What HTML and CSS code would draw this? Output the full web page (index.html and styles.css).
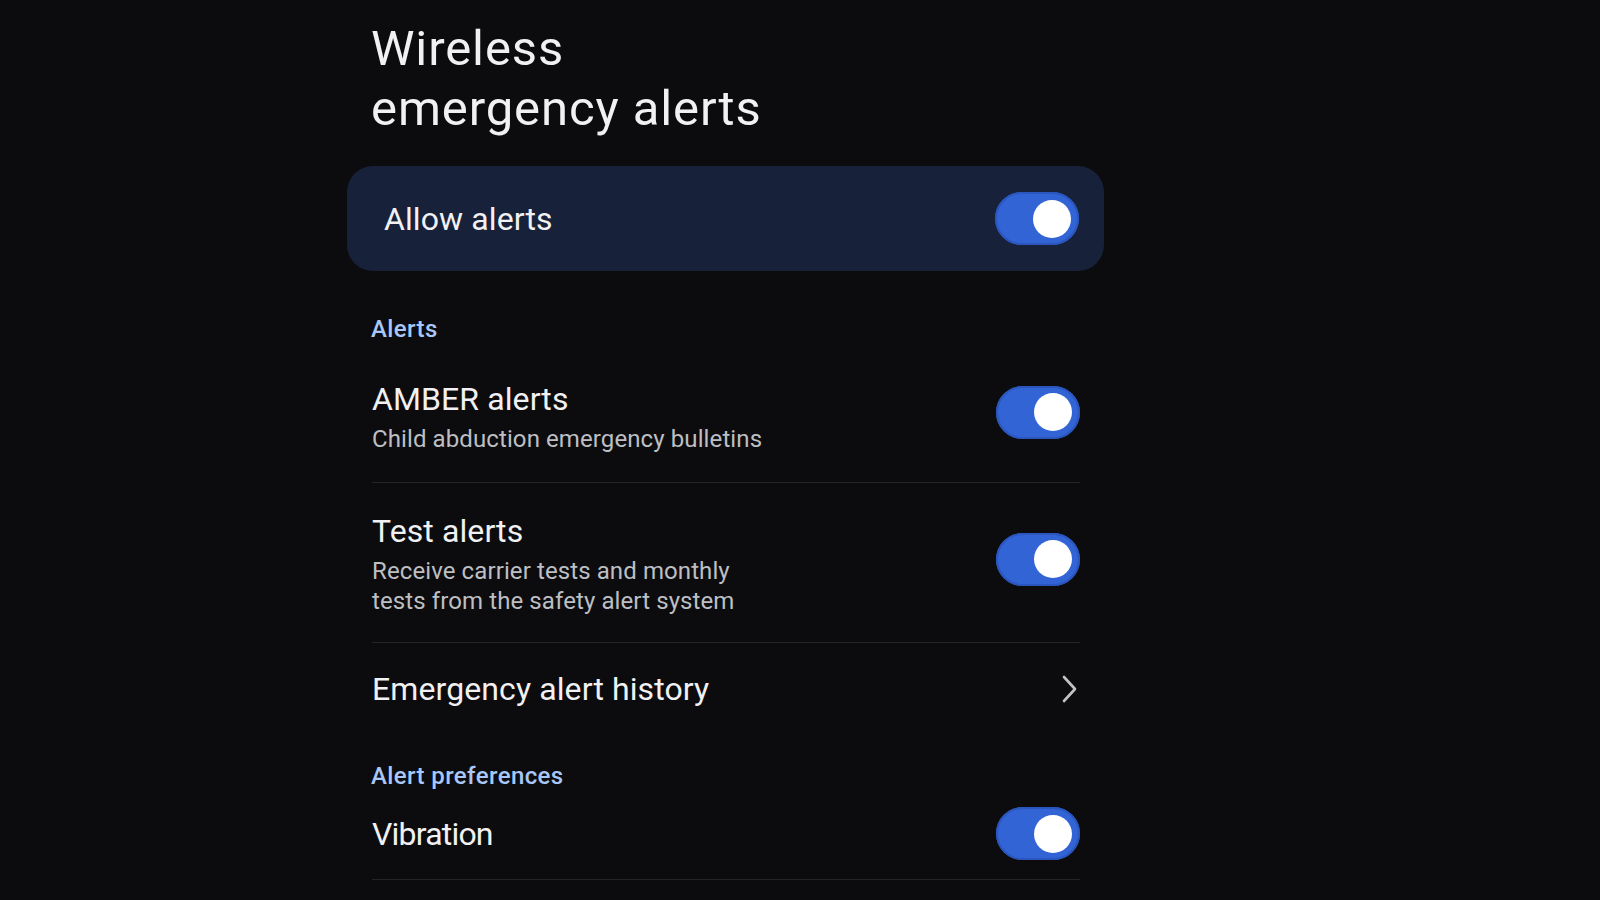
FILE: index.html
```html
<!DOCTYPE html>
<html lang="en">
<head>
    <meta charset="UTF-8">
    <meta name="viewport" content="width=device-width, initial-scale=1.0">
    <title>Wireless emergency alerts</title>
    <link rel="stylesheet" href="styles.css">
</head>
<body>
    <div class="page">
        <h1 class="title">Wireless<br>emergency alerts</h1>

        <div class="card">
            <div class="card-label">Allow alerts</div>
            <div class="toggle on"><div class="knob"></div></div>
        </div>

        <div class="section-title">Alerts</div>
        <div class="list">
            <div class="row">
                <div class="text">
                    <div class="row-title">AMBER alerts</div>
                    <div class="row-sub">Child abduction emergency bulletins</div>
                </div>
                <div class="toggle on raised"><div class="knob"></div></div>
            </div>
            <div class="row tall">
                <div class="text">
                    <div class="row-title">Test alerts</div>
                    <div class="row-sub">Receive carrier tests and monthly<br>tests from the safety alert system</div>
                </div>
                <div class="toggle on raised"><div class="knob"></div></div>
            </div>
            <div class="row link">
                <div class="row-title">Emergency alert history</div>
                <svg class="chevron" width="18" height="28" viewBox="0 0 18 28">
                    <path d="M3 2 L14 14 L3 26" fill="none" stroke="#c2c2c4" stroke-width="2.6" stroke-linecap="round" stroke-linejoin="round"/>
                </svg>
            </div>
        </div>

        <div class="section-title second">Alert preferences</div>
        <div class="list">
            <div class="row compact">
                <div class="row-title narrow">Vibration</div>
                <div class="toggle on"><div class="knob"></div></div>
            </div>
        </div>
    </div>
</body>
</html>
```

FILE: styles.css
```css
html, body {
    margin: 0;
    padding: 0;
    background-color: #0c0c0e;
    font-family: Roboto, "Noto Sans", sans-serif;
    color: #f1f1f3;
}
.page {
    width: 757px;
    margin-left: 347px;
    padding-top: 19px;
}
.title {
    margin: 0 24px;
    font-size: 49px;
    line-height: 60px;
    font-weight: 400;
    letter-spacing: 0.9px;
}
.card {
    margin-top: 27px;
    height: 105px;
    box-sizing: border-box;
    padding: 0 25px 0 37px;
    background-color: #17213a;
    border-radius: 26px;
    display: flex;
    align-items: center;
    justify-content: space-between;
}
.card-label {
    font-size: 32px;
    line-height: 40px;
    letter-spacing: 0.1px;
}
.section-title {
    margin: 42px 24px 6px;
    font-size: 24px;
    line-height: 32px;
    font-weight: 500;
    letter-spacing: 0.4px;
    color: #a8c7fa;
}
.section-title.second {
    margin-top: 25px;
    margin-bottom: 4px;
}
.list {
    margin: 0 24px 0 25px;
}
.row {
    display: flex;
    align-items: center;
    justify-content: space-between;
    padding: 28px 0;
    border-bottom: 1px solid #242427;
}
.row.tall {
    padding-bottom: 26px;
}
.row.link {
    padding: 26px 0;
    border-bottom: none;
}
.row.compact {
    padding: 11px 0 19px;
}
.row-title {
    font-size: 32px;
    line-height: 40px;
    letter-spacing: 0.1px;
}
.row-title.narrow {
    letter-spacing: -0.8px;
}
.row-sub {
    margin-top: 5px;
    font-size: 24px;
    line-height: 30px;
    letter-spacing: 0.1px;
    color: #bdbfc3;
}
.toggle {
    width: 84px;
    height: 53px;
    box-sizing: border-box;
    border-radius: 27px;
    background-color: #3264d6;
    box-shadow: inset 0 0 0 2px #2a56bd;
    display: flex;
    align-items: center;
    justify-content: flex-end;
    padding-right: 8px;
    flex-shrink: 0;
}
.toggle.raised {
    margin-bottom: 9px;
}
.knob {
    width: 38px;
    height: 38px;
    border-radius: 50%;
    background-color: #ffffff;
}
.chevron {
    margin-right: 1px;
}
```
